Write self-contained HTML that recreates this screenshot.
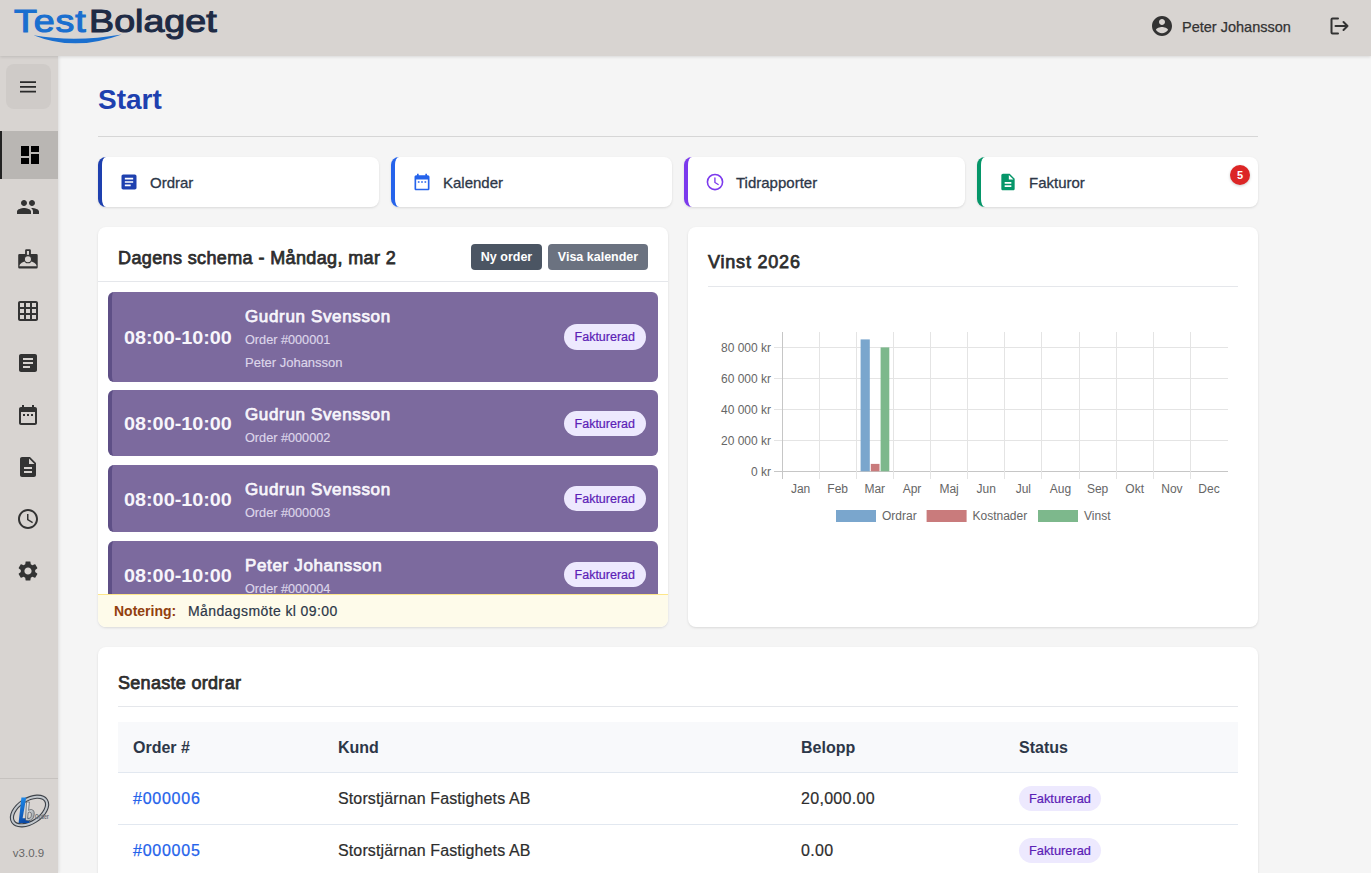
<!DOCTYPE html>
<html><head><meta charset="utf-8">
<style>
*{box-sizing:border-box;margin:0;padding:0}
html,body{width:1371px;height:873px;overflow:hidden}
body{font-family:"Liberation Sans",sans-serif;background:#f5f5f5;position:relative;color:#333}
.abs{position:absolute}
#header{left:0;top:0;width:1371px;height:56px;background:#d8d4d1;box-shadow:0 1px 3px rgba(0,0,0,.12);z-index:3}
#sidebar{left:0;top:56px;width:58px;height:817px;background:#d8d4d1;box-shadow:1px 0 3px rgba(0,0,0,.10);z-index:2}
.ham{left:6px;top:8px;width:45px;height:45px;border-radius:8px;background:#cfcbc8}
.nav-active{left:0;top:75px;width:58px;height:48px;background:#b9b6b3;border-left:2px solid #222}
.icon{position:absolute;left:16px;width:24px;height:24px}
.card{background:#fff;border-radius:8px;box-shadow:0 1px 3px rgba(0,0,0,.08),0 1px 2px rgba(0,0,0,.04)}
.qcard{top:157px;width:281px;height:50px;border-left:4px solid #1e40af;display:flex;align-items:center}
.qcard .qi{position:absolute;left:19px;top:15px;width:20px;height:20px}
.qcard .qt{position:absolute;left:48px;top:17px;font-size:15px;color:#2d3748;line-height:18px;-webkit-text-stroke:0.3px #2d3748}
.btn{position:absolute;height:26px;border-radius:4px;color:#fff;font-size:12.5px;font-weight:bold;text-align:center;line-height:26px;white-space:nowrap}
.item{position:absolute;left:0;width:550px;background:#7c6a9e;border-left:4px solid #5e4f86;border-radius:6px}
.item .time{position:absolute;left:12px;top:0;bottom:0;display:flex;align-items:center;padding-top:3px;font-size:18px;font-weight:bold;color:#f7f5fb;letter-spacing:0px;transform:scaleX(1.1);transform-origin:0 50%}
.item .info{position:absolute;left:133px;top:14px}
.item .nm{font-size:17px;font-weight:normal;-webkit-text-stroke:0.75px #f7f5fb;letter-spacing:0.65px;color:#f7f5fb;line-height:22px;white-space:nowrap}
.item .sub{font-size:12.7px;color:#ddd6ea;-webkit-text-stroke:0.15px #ddd6ea;line-height:20px;margin-top:2px;white-space:nowrap}
.item .sub2{font-size:13px;color:#ddd6ea;-webkit-text-stroke:0.15px #ddd6ea;line-height:20px;margin-top:3px;white-space:nowrap}
.bdg{position:absolute;right:12px;top:21px;height:25px;padding:0 11px;border-radius:13px;background:#ede9fe;color:#5b21b6;font-size:12.5px;line-height:26px;white-space:nowrap;-webkit-text-stroke:0.2px #5b21b6}
.th{font-size:16px;font-weight:bold;color:#2d3748;line-height:20px;margin-top:1px;white-space:nowrap}
.td{font-size:16px;color:#2d2d2d;line-height:20px;white-space:nowrap;letter-spacing:0.12px;-webkit-text-stroke:0.2px currentColor}
.lnk{color:#2563eb;letter-spacing:0.75px;-webkit-text-stroke:0.25px #2563eb}
.tb{height:25px;padding:0 10px;border-radius:13px;background:#ede9fe;color:#5b21b6;font-size:12.8px;line-height:25px;white-space:nowrap;-webkit-text-stroke:0.2px #5b21b6}
</style></head>
<body>
<div id="header" class="abs">
  <div class="abs" id="logo" style="left:14px;top:1px;font-size:32px;font-weight:normal;letter-spacing:0px;line-height:40px;transform:scaleX(1.175);transform-origin:0 0;white-space:nowrap">
    <span style="color:#1a6fcf;-webkit-text-stroke:1.1px #1a6fcf;letter-spacing:0.8px">Test</span><span id="logo_b" style="color:#1e2b45;-webkit-text-stroke:1.1px #1e2b45;margin-left:2px">Bolaget</span>
  </div>
  <svg class="abs" style="left:0;top:0" width="140" height="56" viewBox="0 0 140 56"><path d="M33.5 35.2 Q75 51.9 121.6 34.4 Q75 42.5 33.5 35.2Z" fill="#1a6fcf"/></svg>
  <svg class="abs" style="left:1150px;top:14px" width="24" height="24" viewBox="0 0 24 24"><path fill="#333" d="M12 2C6.48 2 2 6.48 2 12s4.48 10 10 10 10-4.48 10-10S17.52 2 12 2zm0 3c1.66 0 3 1.34 3 3s-1.34 3-3 3-3-1.34-3-3 1.34-3 3-3zm0 14.2c-2.5 0-4.71-1.28-6-3.22.03-1.99 4-3.08 6-3.08 1.99 0 5.97 1.09 6 3.08-1.29 1.94-3.5 3.22-6 3.22z"/></svg>
  <div class="abs" style="left:1182px;top:18px;font-size:14.5px;color:#333;line-height:18px;-webkit-text-stroke:0.25px #333">Peter Johansson</div>
  <svg class="abs" style="left:1326px;top:14px" width="24" height="24" viewBox="0 0 24 24" fill="none" stroke="#333" stroke-width="2" stroke-linecap="round" stroke-linejoin="round"><path d="M12 4.5H6.5a1 1 0 0 0-1 1v13a1 1 0 0 0 1 1H12"/><path d="M9.5 12H21.5M17.5 8l4 4-4 4"/></svg>
</div>

<div id="sidebar" class="abs">
  <div class="abs ham"></div>
  <svg class="abs" style="left:19px;top:25px" width="18" height="13" viewBox="0 0 18 13"><path d="M1 1.2H17M1 5.9H17M1 10.6H17" stroke="#2a2a2a" stroke-width="1.7"/></svg>
  <div class="abs nav-active"></div>
  <svg class="icon" style="top:87px;left:18px" viewBox="0 0 24 24"><path fill="#000" d="M3 13h8V3H3v10zm0 8h8v-6H3v6zm10 0h8V11h-8v10zm0-18v6h8V3h-8z"/></svg>
  <svg class="icon" style="top:139px" viewBox="0 0 24 24"><path fill="#333" d="M16 11c1.66 0 2.99-1.34 2.99-3S17.66 5 16 5c-1.66 0-3 1.34-3 3s1.34 3 3 3zm-8 0c1.66 0 2.99-1.34 2.99-3S9.66 5 8 5C6.34 5 5 6.34 5 8s1.34 3 3 3zm0 2c-2.33 0-7 1.17-7 3.5V19h14v-2.5c0-2.33-4.67-3.5-7-3.5zm8 0c-.29 0-.62.02-.97.05 1.16.84 1.97 1.97 1.97 3.45V19h6v-2.5c0-2.33-4.67-3.5-7-3.5z"/></svg>
  <svg class="icon" style="top:191px" viewBox="0 0 24 24"><path fill="#333" d="M9.1 3.4Q9.1 2.2 10.3 2.2H13.7Q14.9 2.2 14.9 3.4V7H20.4Q21.7 7 21.7 8.3V20.3Q21.7 21.6 20.4 21.6H3.5Q2.2 21.6 2.2 20.3V8.3Q2.2 7 3.5 7H9.1Z"/><rect x="10.9" y="4" width="2.1" height="3.8" fill="#d8d4d1"/><path d="M3.3 19.2Q3.8 14.6 12 13.9Q20.2 14.6 20.7 19.2Z" fill="#d8d4d1"/><circle cx="11.95" cy="12.2" r="3.6" fill="#d8d4d1" stroke="#333" stroke-width="1.1"/></svg>
  <svg class="icon" style="top:243px" viewBox="0 0 24 24"><path fill="#333" d="M20 2H4c-1.1 0-2 .9-2 2v16c0 1.1.9 2 2 2h16c1.1 0 2-.9 2-2V4c0-1.1-.9-2-2-2zM8 20H4v-4h4v4zm0-6H4v-4h4v4zm0-6H4V4h4v4zm6 12h-4v-4h4v4zm0-6h-4v-4h4v4zm0-6h-4V4h4v4zm6 12h-4v-4h4v4zm0-6h-4v-4h4v4zm0-6h-4V4h4v4z"/></svg>
  <svg class="icon" style="top:295px" viewBox="0 0 24 24"><path fill="#333" d="M19 3H5c-1.1 0-2 .9-2 2v14c0 1.1.9 2 2 2h14c1.1 0 2-.9 2-2V5c0-1.1-.9-2-2-2zm-5 14H7v-2h7v2zm3-4H7v-2h10v2zm0-4H7V7h10v2z"/></svg>
  <svg class="icon" style="top:347px" viewBox="0 0 24 24"><path fill="#333" d="M9 11H7v2h2v-2zm4 0h-2v2h2v-2zm4 0h-2v2h2v-2zm2-7h-1V2h-2v2H8V2H6v2H5c-1.11 0-1.99.9-1.99 2L3 20c0 1.1.89 2 2 2h14c1.1 0 2-.9 2-2V6c0-1.1-.9-2-2-2zm0 16H5V9h14v11z"/></svg>
  <svg class="icon" style="top:399px" viewBox="0 0 24 24"><path fill="#333" d="M14 2H6c-1.1 0-1.99.9-1.99 2L4 20c0 1.1.89 2 2 2h12c1.1 0 2-.9 2-2V8l-6-6zm2 16H8v-2h8v2zm0-4H8v-2h8v2zm-3-5V3.5L18.5 9H13z"/></svg>
  <svg class="icon" style="top:451px" viewBox="0 0 24 24"><path fill="#333" d="M11.99 2C6.47 2 2 6.48 2 12s4.47 10 9.99 10C17.52 22 22 17.52 22 12S17.52 2 11.99 2zM12 20c-4.42 0-8-3.58-8-8s3.58-8 8-8 8 3.58 8 8-3.58 8-8 8zm.5-13H11v6l5.25 3.15.75-1.23-4.5-2.67z"/></svg>
  <svg class="icon" style="top:503px" viewBox="0 0 24 24"><path fill="#333" d="M19.14 12.94c.04-.3.06-.61.06-.94 0-.32-.02-.64-.07-.94l2.03-1.58c.18-.14.23-.41.12-.61l-1.92-3.32c-.12-.22-.37-.29-.59-.22l-2.39.96c-.5-.38-1.03-.7-1.62-.94l-.36-2.54c-.04-.24-.24-.41-.48-.41h-3.84c-.24 0-.43.17-.47.41l-.36 2.54c-.59.24-1.13.57-1.62.94l-2.39-.96c-.22-.08-.47 0-.59.22L2.74 8.87c-.12.21-.08.47.12.61l2.03 1.58c-.05.3-.09.63-.09.94s.02.64.07.94l-2.03 1.58c-.18.14-.23.41-.12.61l1.92 3.32c.12.22.37.29.59.22l2.39-.96c.5.38 1.03.7 1.62.94l.36 2.54c.05.24.24.41.48.41h3.84c.24 0 .44-.17.47-.41l.36-2.54c.59-.24 1.13-.56 1.62-.94l2.39.96c.22.08.47 0 .59-.22l1.92-3.32c.12-.22.07-.47-.12-.61l-2.01-1.58zM12 15.6c-1.98 0-3.6-1.62-3.6-3.6s1.62-3.6 3.6-3.6 3.6 1.62 3.6 3.6-1.62 3.6-3.6 3.6z"/></svg>
  <div class="abs" style="left:0;top:722px;width:58px;height:1px;background:#c6c2bf"></div>
  <svg class="abs" style="left:0;top:722px" width="58" height="60" viewBox="0 778 58 60">
    <defs><linearGradient id="lg1" x1="0" y1="0" x2="0.3" y2="1"><stop offset="0" stop-color="#1f8ff0"/><stop offset="1" stop-color="#0a4aa8"/></linearGradient>
    <linearGradient id="lg2" x1="0" y1="0" x2="1" y2="1"><stop offset="0" stop-color="#f2f4f6"/><stop offset="1" stop-color="#9aa0a6"/></linearGradient></defs>
    <ellipse cx="29.5" cy="811" rx="19.6" ry="11.4" transform="rotate(-33 29.5 811)" fill="none" stroke="#3e434a" stroke-width="4.2"/>
    <ellipse cx="29.5" cy="811" rx="19.6" ry="11.4" transform="rotate(-33 29.5 811)" fill="none" stroke="#c2c7cc" stroke-width="2"/>
    <path d="M21.4 797.4H26.2L22.6 818.2H30.6L29 823H18.6Z" fill="url(#lg1)"/>
    <path d="M26.6 802H29.4L28.6 810.4Q29.8 809.4 31.4 809.5Q34.6 810 34.2 814.6Q33.6 820.2 28.8 820.8Q26.4 821 25.4 820ZM28.2 812.6L27.6 818.4Q31 818.8 31.4 815Q31.7 812.2 29.9 812.1Q28.9 812.1 28.2 812.6Z" fill="url(#lg2)" stroke="#3e434a" stroke-width="0.6"/>
    <text x="34.8" y="818.8" font-family="Liberation Sans, sans-serif" font-size="7" font-weight="bold" fill="#6a7077" textLength="14" lengthAdjust="spacingAndGlyphs">Order</text>
  </svg>
  <div class="abs" id="t_ver" style="left:0;top:790px;width:57px;text-align:center;font-size:11.5px;color:#666;line-height:14px">v3.0.9</div>
</div>

<!-- page title -->
<div class="abs" style="left:98px;top:83px;font-size:28px;font-weight:bold;color:#1e40af;line-height:34px">Start</div>
<div class="abs" style="left:98px;top:136px;width:1160px;height:1px;background:#d6d6d6"></div>

<div class="abs card qcard" style="left:98px;border-left-color:#1e40af">
  <svg class="qi" style="left:16.5px;top:14.5px" width="22" height="22" viewBox="0 0 24 24"><path fill="#1e40af" d="M19 3H5c-1.1 0-2 .9-2 2v14c0 1.1.9 2 2 2h14c1.1 0 2-.9 2-2V5c0-1.1-.9-2-2-2zm-5 14H7v-2h7v2zm3-4H7v-2h10v2zm0-4H7V7h10v2z"/></svg>
  <span class="qt" id="t_ordrar">Ordrar</span></div>
<div class="abs card qcard" style="left:391px;border-left-color:#2563eb">
  <svg class="qi" style="left:16.5px;top:14.5px" width="22" height="22" viewBox="0 0 24 24"><path fill="#2563eb" d="M9 11H7v2h2v-2zm4 0h-2v2h2v-2zm4 0h-2v2h2v-2zm2-7h-1V2h-2v2H8V2H6v2H5c-1.11 0-1.99.9-1.99 2L3 20c0 1.1.89 2 2 2h14c1.1 0 2-.9 2-2V6c0-1.1-.9-2-2-2zm0 16H5V9h14v11z"/></svg>
  <span class="qt" id="t_kal">Kalender</span></div>
<div class="abs card qcard" style="left:684px;border-left-color:#7c3aed">
  <svg class="qi" style="left:16.5px;top:14.5px" width="22" height="22" viewBox="0 0 24 24"><circle cx="12" cy="12" r="9.1" fill="none" stroke="#7c3aed" stroke-width="1.9"/><path d="M11.9 7.2V12.6L15.8 15" fill="none" stroke="#7c3aed" stroke-width="1.6" stroke-linecap="round"/></svg>
  <span class="qt" id="t_tid">Tidrapporter</span></div>
<div class="abs card qcard" style="left:977px;border-left-color:#059669">
  <svg class="qi" style="left:16.5px;top:14.5px" width="22" height="22" viewBox="0 0 24 24"><path fill="#059669" d="M14 2H6c-1.1 0-1.99.9-1.99 2L4 20c0 1.1.89 2 2 2h12c1.1 0 2-.9 2-2V8l-6-6zm2 16H8v-2h8v2zm0-4H8v-2h8v2zm-3-5V3.5L18.5 9H13z"/></svg>
  <span class="qt" id="t_fak">Fakturor</span>
  <div class="abs" style="left:249px;top:8px;width:20px;height:20px;border-radius:50%;background:#dc2626;color:#fff;font-size:11px;font-weight:bold;text-align:center;line-height:20px;box-shadow:0 1px 3px rgba(0,0,0,.2)">5</div>
</div>

<div class="abs card" style="left:98px;top:227px;width:570px;height:400px;overflow:hidden">
  <div class="abs" style="left:0;top:0;width:570px;height:55px;border-bottom:1px solid #e5e7eb"></div>
  <div class="abs" id="t_dag" style="left:20px;top:20px;font-size:18px;font-weight:normal;-webkit-text-stroke:0.75px #2d2d2d;letter-spacing:0.38px;color:#2d2d2d;line-height:22px;white-space:nowrap">Dagens schema - Måndag, mar 2</div>
  <div class="abs btn" style="left:373px;top:17px;width:71px;background:#4b5563"><span id="t_ny">Ny order</span></div>
  <div class="abs btn" style="left:450px;top:17px;width:100px;background:#6b7280"><span id="t_visa">Visa kalender</span></div>
  <div class="abs" style="left:10px;top:65px;width:550px;height:302px;overflow:hidden">
    <div class="item" style="top:0;height:90px">
      <div class="time">08:00-10:00</div>
      <div class="info"><div class="nm" id="t_nm1">Gudrun Svensson</div><div class="sub" id="t_o1">Order #000001</div><div class="sub2" id="t_p1">Peter Johansson</div></div>
      <div class="bdg" style="top:32px;height:26px;line-height:26px">Fakturerad</div>
    </div>
    <div class="item" style="top:98px;height:66px">
      <div class="time">08:00-10:00</div>
      <div class="info"><div class="nm">Gudrun Svensson</div><div class="sub">Order #000002</div></div>
      <div class="bdg">Fakturerad</div>
    </div>
    <div class="item" style="top:173px;height:67px">
      <div class="time">08:00-10:00</div>
      <div class="info"><div class="nm">Gudrun Svensson</div><div class="sub">Order #000003</div></div>
      <div class="bdg">Fakturerad</div>
    </div>
    <div class="item" style="top:249px;height:67px">
      <div class="time">08:00-10:00</div>
      <div class="info"><div class="nm">Peter Johansson</div><div class="sub">Order #000004</div></div>
      <div class="bdg">Fakturerad</div>
    </div>
  </div>
  <div class="abs" style="left:0;top:367px;width:570px;height:33px;background:#fefbea;border-top:1px solid #fde68a">
    <span class="abs" id="t_not" style="left:16px;top:8px;font-size:14px;font-weight:bold;color:#92400e;line-height:17px">Notering:</span>
    <span class="abs" id="t_mnd" style="left:90px;top:8px;font-size:14px;letter-spacing:0.4px;color:#2d3748;-webkit-text-stroke:0.2px #2d3748;line-height:17px">Måndagsmöte kl 09:00</span>
  </div>
</div>
<div class="abs card" style="left:688px;top:227px;width:570px;height:400px">
  <div class="abs" id="t_vinst" style="left:20px;top:24px;letter-spacing:0.8px;-webkit-text-stroke:0.75px #2d2d2d;font-size:18px;font-weight:normal;color:#2d2d2d;line-height:22px;white-space:nowrap">Vinst 2026</div>
  <div class="abs" style="left:20px;top:59px;width:530px;height:1px;background:#e5e7eb"></div>
  <svg class="abs" style="left:0;top:0" width="570" height="400" viewBox="688 227 570 400" font-family="Liberation Sans, sans-serif" font-size="12" fill="#666">
  <path d="M774 471.5H1228" stroke="#c6c6c6" stroke-width="1"/>
  <path d="M774 440.5H1228" stroke="#e4e4e4" stroke-width="1"/>
  <path d="M774 409.5H1228" stroke="#e4e4e4" stroke-width="1"/>
  <path d="M774 378.5H1228" stroke="#e4e4e4" stroke-width="1"/>
  <path d="M774 347.5H1228" stroke="#e4e4e4" stroke-width="1"/>
  <path d="M782.5 332V479" stroke="#c6c6c6" stroke-width="1"/>
  <path d="M819.5 332V479" stroke="#e4e4e4" stroke-width="1"/>
  <path d="M856.5 332V479" stroke="#e4e4e4" stroke-width="1"/>
  <path d="M893.5 332V479" stroke="#e4e4e4" stroke-width="1"/>
  <path d="M930.5 332V479" stroke="#e4e4e4" stroke-width="1"/>
  <path d="M967.5 332V479" stroke="#e4e4e4" stroke-width="1"/>
  <path d="M1004.5 332V479" stroke="#e4e4e4" stroke-width="1"/>
  <path d="M1041.5 332V479" stroke="#e4e4e4" stroke-width="1"/>
  <path d="M1079.5 332V479" stroke="#e4e4e4" stroke-width="1"/>
  <path d="M1116.5 332V479" stroke="#e4e4e4" stroke-width="1"/>
  <path d="M1153.5 332V479" stroke="#e4e4e4" stroke-width="1"/>
  <path d="M1190.5 332V479" stroke="#e4e4e4" stroke-width="1"/>
  <text x="771" y="475.5" text-anchor="end">0 kr</text>
  <text x="771" y="444.5" text-anchor="end">20 000 kr</text>
  <text x="771" y="413.6" text-anchor="end">40 000 kr</text>
  <text x="771" y="382.6" text-anchor="end">60 000 kr</text>
  <text x="771" y="351.6" text-anchor="end">80 000 kr</text>
  <text x="800.6" y="493" text-anchor="middle">Jan</text>
  <text x="837.7" y="493" text-anchor="middle">Feb</text>
  <text x="874.8" y="493" text-anchor="middle">Mar</text>
  <text x="912.0" y="493" text-anchor="middle">Apr</text>
  <text x="949.1" y="493" text-anchor="middle">Maj</text>
  <text x="986.2" y="493" text-anchor="middle">Jun</text>
  <text x="1023.3" y="493" text-anchor="middle">Jul</text>
  <text x="1060.5" y="493" text-anchor="middle">Aug</text>
  <text x="1097.6" y="493" text-anchor="middle">Sep</text>
  <text x="1134.7" y="493" text-anchor="middle">Okt</text>
  <text x="1171.9" y="493" text-anchor="middle">Nov</text>
  <text x="1209.0" y="493" text-anchor="middle">Dec</text>
  <rect x="860.6" y="339.4" width="9.2" height="131.9" fill="#7aa6cd"/>
  <rect x="870.8" y="463.9" width="8.7" height="7.4" fill="#c97b7c"/>
  <rect x="880.6" y="347.4" width="8.7" height="123.9" fill="#7db88c"/>
  <rect x="836" y="510" width="40" height="12" fill="#7aa6cd"/><text x="882" y="520.2">Ordrar</text>
  <rect x="926.6" y="510" width="40" height="12" fill="#c97b7c"/><text x="972.5" y="520.2">Kostnader</text>
  <rect x="1038" y="510" width="40" height="12" fill="#7db88c"/><text x="1084" y="520.2">Vinst</text>
  </svg>
</div>
<div class="abs card" style="left:98px;top:647px;width:1160px;height:300px">
  <div class="abs" id="t_sen" style="left:20px;top:25px;letter-spacing:0.3px;-webkit-text-stroke:0.75px #2d2d2d;font-size:18px;font-weight:normal;color:#2d2d2d;line-height:22px;white-space:nowrap">Senaste ordrar</div>
  <div class="abs" style="left:20px;top:59px;width:1120px;height:1px;background:#e5e7eb"></div>
  <div class="abs" style="left:20px;top:75px;width:1120px;height:51px;background:#f8f9fb;border-bottom:1px solid #e2e8f0"></div>
  <div class="abs th" id="t_th1" style="left:35px;top:90px">Order #</div>
  <div class="abs th" style="left:240px;top:90px">Kund</div>
  <div class="abs th" style="left:703px;top:90px">Belopp</div>
  <div class="abs th" style="left:921px;top:90px">Status</div>
  <div class="abs" style="left:20px;top:177px;width:1120px;height:1px;background:#e2e8f0"></div>
  <div class="abs td lnk" id="t_r1" style="left:35px;top:142px">#000006</div>
  <div class="abs td" id="t_r1k" style="left:240px;top:142px">Storstjärnan Fastighets AB</div>
  <div class="abs td" id="t_r1b" style="left:703px;top:142px;letter-spacing:0.3px">20,000.00</div>
  <div class="abs tb" style="left:921px;top:139px">Fakturerad</div>
  <div class="abs td lnk" style="left:35px;top:194px">#000005</div>
  <div class="abs td" style="left:240px;top:194px">Storstjärnan Fastighets AB</div>
  <div class="abs td" style="left:703px;top:194px;letter-spacing:0.3px">0.00</div>
  <div class="abs tb" style="left:921px;top:191px">Fakturerad</div>
</div>
</body></html>
